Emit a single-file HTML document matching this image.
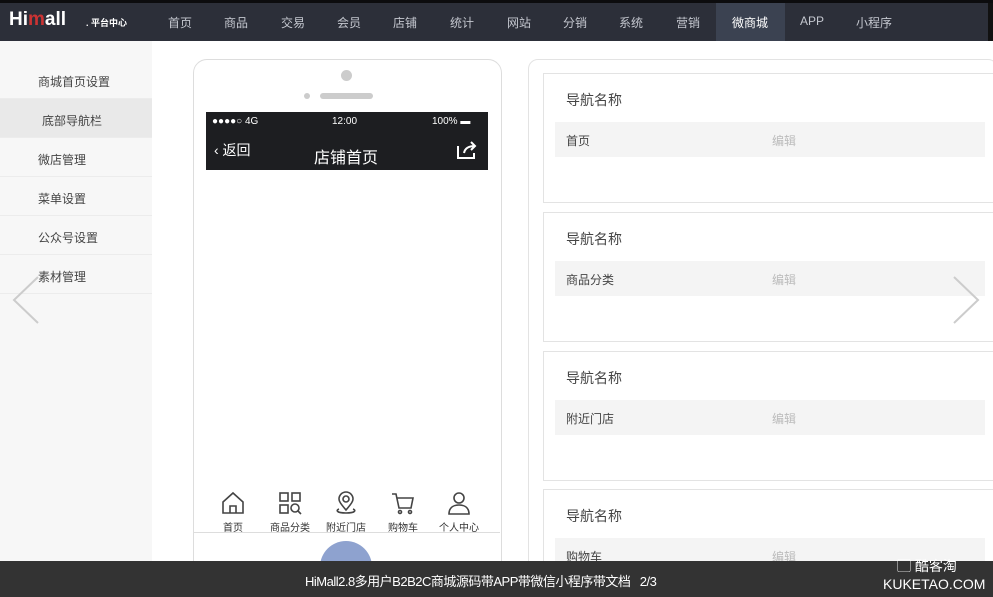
<!DOCTYPE html>
<html><head><meta charset="utf-8"><style>
*{margin:0;padding:0;box-sizing:border-box}
html,body{width:993px;height:597px;overflow:hidden}
body{position:relative;background:#fff;font-family:"Liberation Sans","Noto Sans CJK SC",sans-serif;}
.abs{position:absolute}
.nav{left:0;top:0;width:993px;height:41px;background:#2c2f39;border-top:3px solid #0c0c0e;}
.nav span{position:absolute;top:11px;color:#c4c7cf;font-size:12px}
.side{left:0;top:41px;width:152px;height:520px;background:#f7f7f7}
.side div{position:absolute;left:38px;font-size:12px;color:#444}
.side i{position:absolute;left:0;width:152px;height:1px;background:#ececec}
.phone{left:193px;top:59px;width:309px;height:560px;border:1.5px solid #ddd;border-radius:14px}
.card{left:543px;width:450px;height:130px;border:1px solid #e3e3e3;border-right:none;background:#fff}
.card .t{position:absolute;left:22px;top:16px;font-size:14px;color:#444}
.card .r{position:absolute;left:11px;top:48px;width:430px;height:35px;background:#f4f4f4}
.card .r span{position:absolute;top:10px;font-size:12px;color:#444}
.card .r span.e{left:217px;color:#bbb}
.tab{position:absolute;top:490px;text-align:center;font-size:10px;color:#333;width:50px}
</style></head><body>
<div class="abs nav">
<span style="left:9px;top:6px;color:#fff;font-size:19px;font-weight:bold">Hi<span style="position:static;color:#c33;font-size:19px">m</span>all</span>
<span style="left:86px;top:13px;color:#fff;font-size:9px;font-weight:bold">. 平台中心</span>
<span style="left:168px">首页</span><span style="left:224px">商品</span><span style="left:281px">交易</span><span style="left:337px">会员</span><span style="left:393px">店铺</span><span style="left:450px">统计</span><span style="left:507px">网站</span><span style="left:563px">分销</span><span style="left:619px">系统</span><span style="left:676px">营销</span>
<div class="abs" style="left:716px;top:0;width:69px;height:38px;background:#3b4251"></div>
<span style="left:732px;color:#fff">微商城</span><span style="left:800px">APP</span><span style="left:856px">小程序</span>
<div class="abs" style="left:988px;top:0;width:5px;height:38px;background:#111"></div>
</div>
<div class="abs side">
<div style="left:0;top:57px;width:152px;height:39px;background:#e9e9e9"></div>
<i style="top:57px"></i><i style="top:96px"></i><i style="top:135px"></i><i style="top:174px"></i><i style="top:213px"></i><i style="top:252px"></i>
<div style="top:32px">商城首页设置</div><div style="top:71px;left:42px">底部导航栏</div><div style="top:110px">微店管理</div><div style="top:149px">菜单设置</div><div style="top:188px">公众号设置</div><div style="top:227px">素材管理</div>
</div>
<div class="abs phone"></div>
<div class="abs" style="left:341px;top:70px;width:11px;height:11px;border-radius:50%;background:#ccc"></div>
<div class="abs" style="left:304px;top:93px;width:6px;height:6px;border-radius:50%;background:#ccc"></div>
<div class="abs" style="left:320px;top:93px;width:53px;height:6px;border-radius:3px;background:#ccc"></div>
<div class="abs" style="left:206px;top:112px;width:282px;height:58px;background:#1d1e21;color:#fff">
<span class="abs" style="left:6px;top:4px;font-size:10px">●●●●○ 4G</span>
<span class="abs" style="left:126px;top:4px;font-size:10px">12:00</span>
<span class="abs" style="left:226px;top:4px;font-size:10px">100% ▬</span>
<span class="abs" style="left:8px;top:28px;font-size:14px">‹ 返回</span>
<span class="abs" style="left:108px;top:32px;font-size:16px">店铺首页</span>
<svg class="abs" style="left:250px;top:28px" width="22" height="20" fill="none" stroke="#fff" stroke-width="2"><path d="M2 6v12h16v-5 M8 13c1-5 5-7 11-7 M15 2l4 4-4 4"/></svg>
</div>
<div class="tab" style="left:208px"><svg width="26" height="26" viewBox="0 0 26 26" fill="none" stroke="#444" stroke-width="1.6"><path d="M3 12L13 3l10 9v11H3z M10 23v-7h6v7"/></svg><br>首页</div>
<div class="tab" style="left:265px"><svg width="26" height="26" viewBox="0 0 26 26" fill="none" stroke="#444" stroke-width="1.6"><rect x="3" y="3" width="8" height="8"/><rect x="15" y="3" width="8" height="8"/><rect x="3" y="15" width="8" height="8"/><circle cx="18" cy="18" r="4"/><path d="M21 21l3 3"/></svg><br>商品分类</div>
<div class="tab" style="left:321px"><svg width="26" height="26" viewBox="0 0 26 26" fill="none" stroke="#444" stroke-width="1.6"><path d="M13 20C7 13 6 11 6 9a7 7 0 0114 0c0 2-1 4-7 11z"/><circle cx="13" cy="9" r="3"/><path d="M6 19c-3 1-3 4 7 4s10-3 7-4"/></svg><br>附近门店</div>
<div class="tab" style="left:378px"><svg width="26" height="26" viewBox="0 0 26 26" fill="none" stroke="#444" stroke-width="1.6"><path d="M2 4h4l3 14h12l2-10H7"/><circle cx="10" cy="22" r="1.5"/><circle cx="20" cy="22" r="1.5"/></svg><br>购物车</div>
<div class="tab" style="left:434px"><svg width="26" height="26" viewBox="0 0 26 26" fill="none" stroke="#444" stroke-width="1.6"><circle cx="13" cy="8" r="5"/><path d="M3 24c0-6 4-9 10-9s10 3 10 9z"/></svg><br>个人中心</div>
<div class="abs" style="left:194px;top:532px;width:306px;height:1px;background:#ddd"></div>
<div class="abs" style="left:320px;top:541px;width:52px;height:52px;border-radius:50%;background:#8ea2cf"></div>
<div class="abs" style="left:528px;top:59px;width:470px;height:560px;border:1.5px solid #e3e3e3;border-radius:10px"></div>
<div class="abs card" style="top:73px"><div class="t">导航名称</div><div class="r"><span style="left:11px">首页</span><span class="e">编辑</span></div></div>
<div class="abs card" style="top:212px"><div class="t">导航名称</div><div class="r"><span style="left:11px">商品分类</span><span class="e">编辑</span></div></div>
<div class="abs card" style="top:351px"><div class="t">导航名称</div><div class="r"><span style="left:11px">附近门店</span><span class="e">编辑</span></div></div>
<div class="abs card" style="top:489px"><div class="t">导航名称</div><div class="r"><span style="left:11px">购物车</span><span class="e">编辑</span></div></div>
<svg class="abs" style="left:10px;top:275px" width="32" height="50"><path d="M28 2L4 25l24 23" fill="none" stroke="#ccc" stroke-width="2"/></svg>
<svg class="abs" style="left:950px;top:275px" width="32" height="50"><path d="M4 2l24 23L4 48" fill="none" stroke="#ccc" stroke-width="2"/></svg>
<div class="abs" style="left:0;top:561px;width:993px;height:36px;background:#333"></div>
<div class="abs" style="left:305px;top:571px;color:#fff;font-size:13px;letter-spacing:-0.5px">HiMall2.8多用户B2B2C商城源码带APP带微信小程序带文档&nbsp;&nbsp;&nbsp;2/3</div>
<div class="abs" style="left:897px;top:556px;color:#fff;font-size:14px">▢ 酷客淘</div>
<div class="abs" style="left:883px;top:576px;color:#fff;font-size:14px">KUKETAO.COM</div>
</body></html>
